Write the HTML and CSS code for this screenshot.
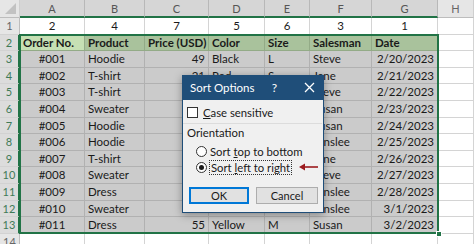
FILE: index.html
```html
<!DOCTYPE html>
<html lang="en">
<head>
    <meta charset="UTF-8">
    <title>Sort Options</title>
    <link rel="stylesheet" href="styles.css">
</head>
<body>

<div class="wrap">
    <div class="sheet">
        <!-- column headers -->
        <div class="ch corner"><span class="tri"></span></div>
        <div class="ch sel">A</div>
        <div class="ch sel">B</div>
        <div class="ch sel">C</div>
        <div class="ch sel">D</div>
        <div class="ch sel">E</div>
        <div class="ch sel">F</div>
        <div class="ch sel">G</div>
        <div class="ch">H</div>

        <!-- row 1 -->
        <div class="rh">1</div>
        <div class="c key">2</div><div class="c key">4</div><div class="c key">7</div><div class="c key">5</div>
        <div class="c key">6</div><div class="c key">3</div><div class="c key">1</div><div class="c blank"></div>

        <!-- row 2 -->
        <div class="rh sel">2</div>
        <div class="c head active">Order No.</div><div class="c head">Product</div><div class="c head">Price (USD)</div>
        <div class="c head">Color</div><div class="c head">Size</div><div class="c head">Salesman</div>
        <div class="c head">Date</div><div class="c blank"></div>

        <div class="rh sel">3</div>
        <div class="c d mid">#001</div><div class="c d">Hoodie</div><div class="c d num">49</div><div class="c d">Black</div>
        <div class="c d">L</div><div class="c d">Steve</div><div class="c d num">2/20/2023</div><div class="c blank"></div>

        <div class="rh sel">4</div>
        <div class="c d mid">#002</div><div class="c d">T-shirt</div><div class="c d num">21</div><div class="c d">Red</div>
        <div class="c d">S</div><div class="c d">Jane</div><div class="c d num">2/21/2023</div><div class="c blank"></div>

        <div class="rh sel">5</div>
        <div class="c d mid">#003</div><div class="c d">T-shirt</div><div class="c d num">25</div><div class="c d">Blue</div>
        <div class="c d">M</div><div class="c d">Steve</div><div class="c d num">2/22/2023</div><div class="c blank"></div>

        <div class="rh sel">6</div>
        <div class="c d mid">#004</div><div class="c d">Sweater</div><div class="c d num">59</div><div class="c d">Gray</div>
        <div class="c d">L</div><div class="c d">Susan</div><div class="c d num">2/23/2023</div><div class="c blank"></div>

        <div class="rh sel">7</div>
        <div class="c d mid">#005</div><div class="c d">Hoodie</div><div class="c d num">49</div><div class="c d">White</div>
        <div class="c d">M</div><div class="c d">Susan</div><div class="c d num">2/24/2023</div><div class="c blank"></div>

        <div class="rh sel">8</div>
        <div class="c d mid">#006</div><div class="c d">Hoodie</div><div class="c d num">49</div><div class="c d">Green</div>
        <div class="c d">S</div><div class="c d">Ainslee</div><div class="c d num">2/25/2023</div><div class="c blank"></div>

        <div class="rh sel">9</div>
        <div class="c d mid">#007</div><div class="c d">T-shirt</div><div class="c d num">25</div><div class="c d">Black</div>
        <div class="c d">L</div><div class="c d">Jane</div><div class="c d num">2/26/2023</div><div class="c blank"></div>

        <div class="rh sel">10</div>
        <div class="c d mid">#008</div><div class="c d">Sweater</div><div class="c d num">59</div><div class="c d">Blue</div>
        <div class="c d">M</div><div class="c d">Steve</div><div class="c d num">2/27/2023</div><div class="c blank"></div>

        <div class="rh sel">11</div>
        <div class="c d mid">#009</div><div class="c d">Dress</div><div class="c d num">55</div><div class="c d">Red</div>
        <div class="c d">S</div><div class="c d">Ainslee</div><div class="c d num">2/28/2023</div><div class="c blank"></div>

        <div class="rh sel">12</div>
        <div class="c d mid">#010</div><div class="c d">Sweater</div><div class="c d num">45</div><div class="c d">Pink</div>
        <div class="c d">S</div><div class="c d">Ainslee</div><div class="c d num">3/1/2023</div><div class="c blank"></div>

        <div class="rh sel">13</div>
        <div class="c d mid">#011</div><div class="c d">Dress</div><div class="c d num">55</div><div class="c d">Yellow</div>
        <div class="c d">M</div><div class="c d">Susan</div><div class="c d num">3/2/2023</div><div class="c blank"></div>

        <div class="rh">14</div>
        <div class="c blank"></div><div class="c blank"></div><div class="c blank"></div><div class="c blank"></div>
        <div class="c blank"></div><div class="c blank"></div><div class="c blank"></div><div class="c blank"></div>
    </div>

    <!-- selection frame over A2:G13 -->
    <div class="selection"><span class="handle"></span></div>

    <!-- Sort Options dialog -->
    <div class="dialog">
        <div class="title-bar">
            <span class="title">Sort Options</span>
            <span class="help">?</span>
            <svg class="close" width="11" height="11" viewBox="0 0 11 11">
                <path d="M1 1 L10 10 M10 1 L1 10" stroke="#fff" stroke-width="1.3" fill="none"/>
            </svg>
        </div>
        <div class="dialog-body">
            <label class="check"><span class="box"></span><span><u>C</u>ase sensitive</span></label>
            <div class="sep"></div>
            <div class="group-title">Orientation</div>
            <label class="radio"><span class="dot"></span><span>Sort <u>t</u>op to bottom</span></label>
            <label class="radio on">
                <span class="dot"></span><span class="focus">Sort <u>l</u>eft to right</span>
                <svg class="arrow" width="20" height="8" viewBox="0 0 20 8">
                    <path d="M5 4 H19" stroke="#9b1b1e" stroke-width="1.6"/>
                    <path d="M0 4 L6 0.5 L6 7.5 Z" fill="#9b1b1e"/>
                </svg>
            </label>
            <div class="buttons">
                <button class="btn default">OK</button>
                <button class="btn">Cancel</button>
            </div>
        </div>
    </div>
</div>

</body>
</html>
```

FILE: styles.css
```css
* {
    box-sizing: border-box;
}
body {
    margin: 0;
    background: #ffffff;
    font-family: Lato, "Open Sans", sans-serif;
    font-size: 11.5px;
    color: #1a1a1a;
    overflow: hidden;
}
.wrap {
    position: relative;
    width: 474px;
    height: 244px;
}
.sheet {
    display: grid;
    grid-template-columns: 20px 65px 60px 64px 56px 45px 62px 66px 36px;
    grid-template-rows: 18px repeat(14, 16.6px);
}
.ch {
    background: #e6e6e6;
    color: #666;
    text-align: center;
    line-height: 17px;
    border-right: 1px solid #cfcfcf;
    border-bottom: 1px solid #bdbdbd;
    font-size: 11px;
}
.ch.sel {
    background: #d6d6d6;
    color: #555;
    border-bottom: 2px solid #217346;
    border-right-color: #b8b8b8;
}
.corner {
    position: relative;
}
.tri {
    position: absolute;
    right: 3px;
    bottom: 3px;
    width: 0;
    height: 0;
    border-left: 11px solid transparent;
    border-bottom: 11px solid #c2c2c2;
}
.rh {
    background: #e6e6e6;
    color: #666;
    text-align: center;
    line-height: 16px;
    border-right: 1px solid #bdbdbd;
    border-bottom: 1px solid #d2d2d2;
    font-size: 11px;
}
.rh.sel {
    background: #dcdcdc;
    color: #3f7a57;
    border-right: 2px solid #217346;
}
.c {
    border-right: 1px solid #d4d4d4;
    border-bottom: 1px solid #d4d4d4;
    line-height: 16px;
    padding: 0 3px;
    white-space: nowrap;
    overflow: hidden;
}
.key {
    background: #fff;
    text-align: center;
}
.blank {
    background: #fff;
}
.head {
    background: #a9c29c;
    font-weight: bold;
    border-color: #93ab87;
}
.head.active {
    background: #c6e0b4;
}
.d {
    background: #cbcbcb;
    border-color: #b1b1b1;
}
.mid {
    text-align: center;
}
.num {
    text-align: right;
}
.selection {
    position: absolute;
    left: 19px;
    top: 34px;
    width: 420px;
    height: 200px;
    border: 2px solid #217346;
    pointer-events: none;
}
.handle {
    position: absolute;
    right: -5px;
    bottom: -5px;
    width: 6px;
    height: 6px;
    background: #217346;
    border: 1px solid #fff;
}

/* dialog */
.dialog {
    position: absolute;
    left: 182px;
    top: 75px;
    width: 142px;
    height: 138px;
    background: #f0f0f0;
    border: 1px solid #1f4e79;
    border-top: 0;
    box-shadow: 0 2px 8px rgba(0, 0, 0, 0.35);
    font-family: Lato, "Open Sans", sans-serif;
    font-size: 11.3px;
    color: #1a1a1a;
}
.title-bar {
    display: flex;
    align-items: center;
    height: 25px;
    margin: 0 -1px;
    padding: 0 9px 0 8px;
    background: #1f4e79;
    color: #fff;
    font-size: 11.5px;
}
.title {
    flex: 1;
}
.help {
    margin-right: 27px;
    font-size: 12px;
}
.dialog-body {
    padding: 6px 5px 0 4px;
    white-space: nowrap;
}
.check {
    display: flex;
    align-items: center;
    gap: 5px;
    height: 13px;
}
.box {
    flex: none;
    width: 11px;
    height: 11px;
    border: 1px solid #333;
    background: #fff;
}
.sep {
    height: 1px;
    background: #dcdcdc;
    margin: 4px -4px 2px -4px;
}
.group-title {
    line-height: 14px;
    margin-bottom: 3px;
}
.radio {
    display: flex;
    align-items: center;
    gap: 3px;
    height: 16px;
    padding-left: 9px;
}
.dot {
    flex: none;
    width: 11px;
    height: 11px;
    border: 1px solid #333;
    border-radius: 50%;
    background: #fff;
    position: relative;
}
.radio.on .dot::after {
    content: "";
    position: absolute;
    left: 2px;
    top: 2px;
    width: 5px;
    height: 5px;
    border-radius: 50%;
    background: #1a1a1a;
}
.focus {
    outline: 1px dotted #333;
    padding: 0 1px;
    line-height: 13px;
}
.arrow {
    flex: none;
    margin-left: 5px;
}
.buttons {
    display: flex;
    justify-content: space-between;
    margin-top: 12px;
    padding: 0 0 0 2px;
}
.btn {
    height: 17px;
    background: #e1e1e1;
    border: 1px solid #adadad;
    font-family: inherit;
    font-size: 11px;
    color: #1a1a1a;
    padding: 0;
    line-height: 14px;
}
.btn.default {
    width: 60px;
    border: 2px solid #0078d7;
}
.btn + .btn {
    width: 62px;
}
```
